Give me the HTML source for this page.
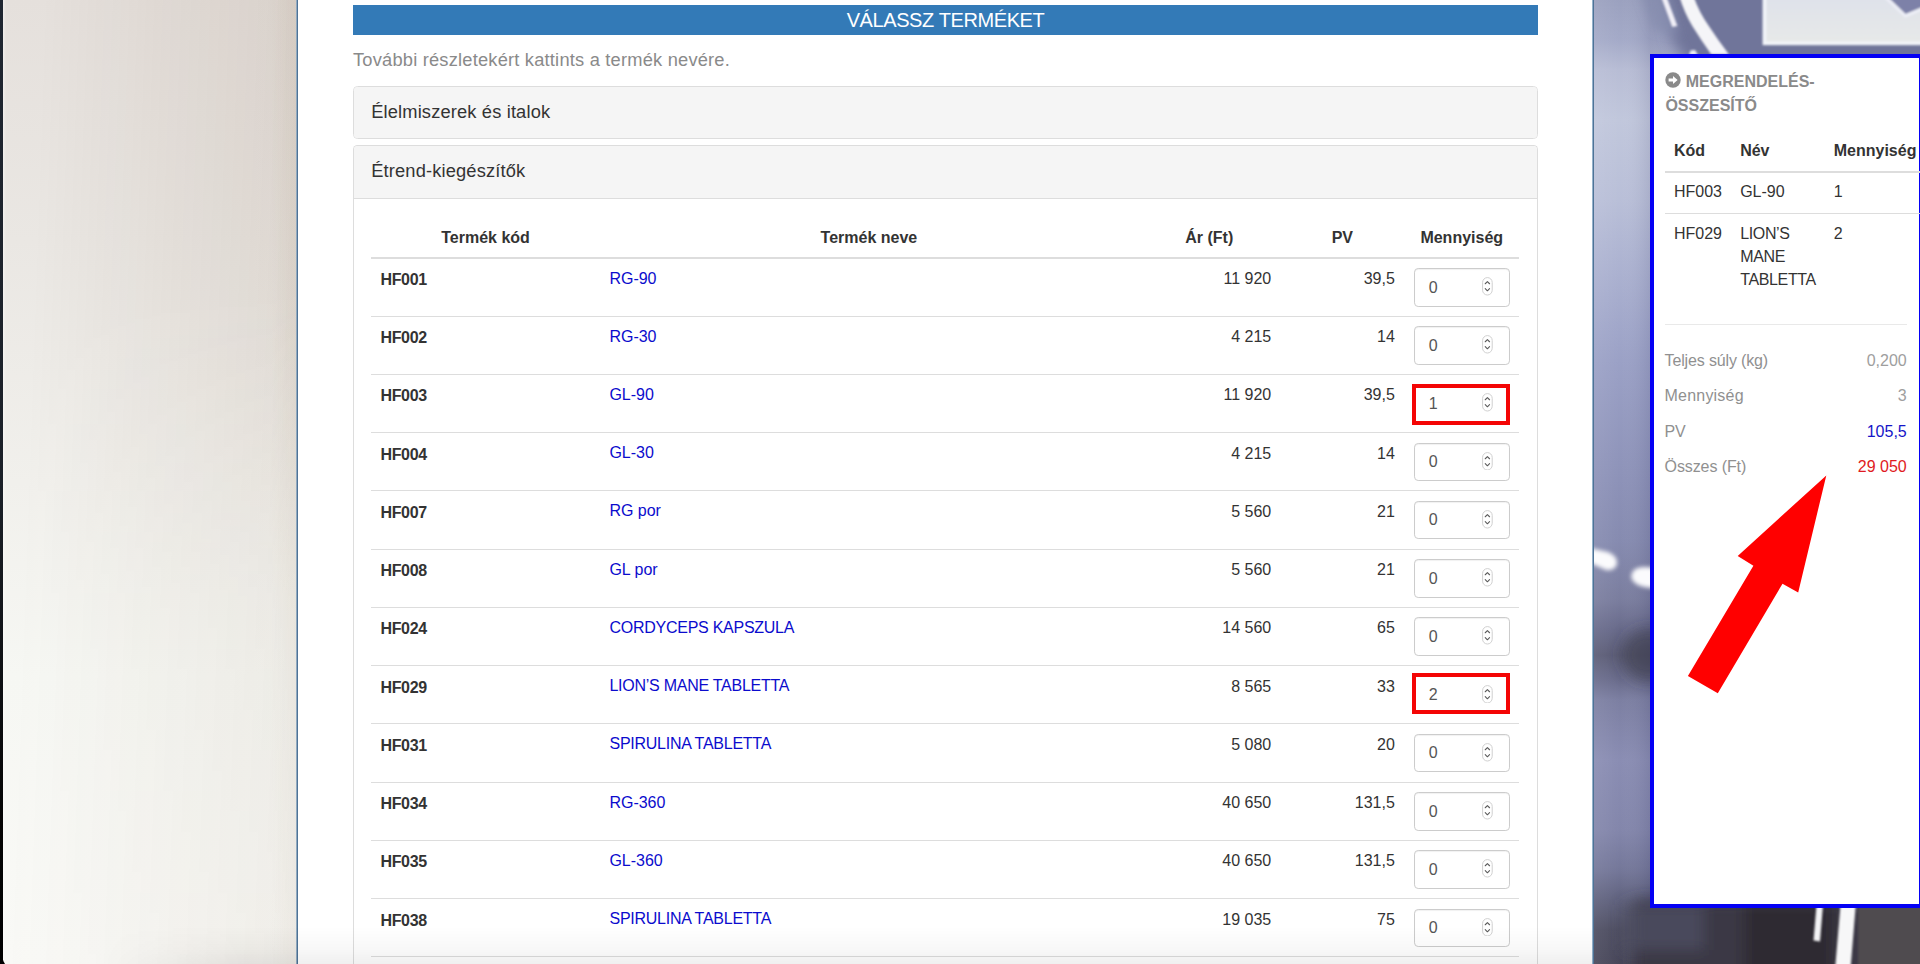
<!DOCTYPE html>
<html lang="hu">
<head>
<meta charset="utf-8">
<title>Válassz terméket</title>
<style>
*{box-sizing:border-box}
html,body{margin:0;padding:0}
body{width:1920px;height:964px;overflow:hidden;position:relative;background:#fff;
  font-family:"Liberation Sans",Arial,Helvetica,sans-serif;font-size:16px;line-height:22.857px;color:#333}
a{color:#0b0bcd;text-decoration:none}
#strip{position:absolute;left:0;top:0;width:3.2px;height:964px;background:linear-gradient(180deg,#1f2631 0%,#1b2028 50%,#050505 85%,#000 100%)}
#bgL{position:absolute;left:3px;top:0;width:294px;height:964px;overflow:hidden}
#bgR{position:absolute;left:1594px;top:0;width:326px;height:964px;overflow:hidden}
#main{position:absolute;left:296.6px;top:0;width:1297.7px;height:964px;background:#fff;
  border:0}
#bar{position:absolute;left:353px;top:5.2px;width:1185px;height:29.5px;background:#337ab7;color:#fff;
  text-align:center;font-size:20px;line-height:31px;letter-spacing:-.4px}
#hint{position:absolute;left:353px;top:47px;font-size:18.29px;line-height:26px;color:#8a8a8a;white-space:nowrap;letter-spacing:.2px}
.panel{position:absolute;left:353px;width:1184.8px;border:1.14px solid #ddd;border-radius:4.5px;background:#fff}
.panel .hd{background:#f5f5f5;height:51.4px;padding:0 0 0 17.2px;font-size:18.29px;line-height:49.6px;letter-spacing:.15px;color:#333;border-radius:3.5px 3.5px 0 0}
#p1{top:86px;height:52.8px}
#p1 .hd{border-radius:3.5px}
#p2{top:145.2px;height:900px;border-bottom:0}
#p2 .hd{border-bottom:1.14px solid #ddd;height:52.4px;line-height:50.6px}

#t{position:absolute;left:17.2px;top:52.4px;margin-top:17.1px;width:1148.1px;border-collapse:collapse;table-layout:fixed}
#t th,#t td{padding:0;vertical-align:top;font-size:16px;line-height:22.857px}
#t thead th{height:42.2px;text-align:center;font-weight:bold;border-bottom:2.3px solid #ddd;padding-top:11px;color:#333}
#t tbody tr{height:58.25px}
#t tbody th,#t tbody td{border-top:1.1px solid #ddd;height:58.25px}
#t tbody tr:first-child th,#t tbody tr:first-child td{border-top:0}
#t .c{text-align:left;font-weight:bold;padding:10.4px 0 0 9.2px;letter-spacing:-.3px}
#t .n{text-align:left;padding:9px 0 0 9.6px;letter-spacing:-.04px}
#t .n .u{letter-spacing:-.26px}
#t .r{text-align:right;padding:9.6px 9.3px 0 0}
#t .q{padding:9.6px 9.4px 0 9.6px}
.in{position:relative;height:38.3px;border:1.14px solid #ccc;border-radius:4.2px;background:#fff;color:#555;box-shadow:inset 0 1px 1px rgba(0,0,0,.06)}
.in span{position:absolute;left:14px;top:7.3px;line-height:22.857px}
.in .sp{position:absolute;left:67.5px;top:8px;width:10.8px;height:18.6px}

#bgL{background:
 linear-gradient(90deg,rgba(255,255,255,.4) 0,rgba(255,255,255,0) 3px),
 linear-gradient(180deg,#e5e0dc 0%,#eae7e3 25%,#f1f0ec 50%,#f6f7f3 70%,#f9f9f6 100%)}
#bgL::before{content:"";position:absolute;inset:0;background:
 linear-gradient(90deg,rgba(140,110,60,0) 268px,rgba(140,110,60,.07) 294px),
 linear-gradient(92deg,rgba(128,98,75,0) 12%,rgba(128,98,75,.06) 50%,rgba(128,98,75,.125) 100%);
 -webkit-mask-image:linear-gradient(180deg,#000 0%,#000 30%,rgba(0,0,0,.62) 62%,rgba(0,0,0,.55) 100%);
 mask-image:linear-gradient(180deg,#000 0%,#000 30%,rgba(0,0,0,.62) 62%,rgba(0,0,0,.55) 100%)}

#sum{position:absolute;left:1649.9px;top:53.9px;width:273.1px;height:854.2px;background:#fff;border:4.3px solid #0000ff}
#sum>*{position:absolute}
#sttl{left:0;top:0;width:265px;height:70px;color:#8a8a8a;font-weight:bold;font-size:16px;line-height:23.8px}
#ico{position:absolute;left:11px;top:14.6px}
#sttl span{position:absolute;left:11.5px;top:12.4px;text-indent:20.4px;white-space:nowrap}
#st{left:10.7px;top:0;margin-top:78.1px;border-collapse:collapse;table-layout:fixed;width:300px}
#st th,#st td{padding:0 0 0 9.4px;text-align:left;vertical-align:top;font-size:16px;line-height:22.857px;color:#333;white-space:nowrap}
#st th{height:36px;border-bottom:2.3px solid #ddd;padding-top:4.2px}
#st td{padding-top:9.6px}
#st tbody tr:first-child td{height:41.1px;border-bottom:1.1px solid #ddd;padding-top:8.2px}
#st td.w{letter-spacing:-.35px}
#hr{left:10.7px;top:266.2px;width:242.2px;height:1.2px;background:#e9e9e9}
.sr{left:10.7px;width:242.2px;height:22.857px;line-height:22.857px;color:#909090;font-size:16px;white-space:nowrap}
.sr span{position:absolute;left:0;letter-spacing:-.15px}
.sr b{position:absolute;right:0;font-weight:normal;color:#9e9e9e}
#arrow{position:absolute;left:0;top:0;pointer-events:none}

#shade{-webkit-mask-image:linear-gradient(90deg,transparent 100px,#000 240px);mask-image:linear-gradient(90deg,transparent 100px,#000 240px);position:absolute;left:3px;top:926px;width:1590px;height:38px;background:linear-gradient(180deg,rgba(0,0,0,0),rgba(0,0,0,.028) 60%,rgba(0,0,0,.06));pointer-events:none}
#corner{position:absolute;left:0;top:956.5px;width:14.4px;height:7.5px;background:radial-gradient(circle at 100% 0,rgba(0,0,0,0) 10.8px,#000 11.8px);pointer-events:none}
.rb{position:absolute;left:-2.3px;width:97.8px;height:40.8px;border:4px solid #f40505;pointer-events:none}
.rb.a{top:-1.6px}
.rb.b{top:-3.8px}
.in.nb{border-color:transparent;box-shadow:none}
.vl{position:absolute;top:0;width:2px;height:964px}
#sum{border-color:#0400f4}
</style>
</head>
<body>
<div id="strip"></div>
<div id="bgL"></div>
<div id="main"></div>
<div class="vl" style="left:296px;background:linear-gradient(90deg,#b4c6d6,#4e7396 70%)"></div><div class="vl" style="left:1592.4px;background:linear-gradient(90deg,#cfe4f7,#4e7396 55%,#4e7396)"></div>
<div id="bgR"><svg width="326" height="964" viewBox="0 0 326 964">
<defs>
<linearGradient id="gv" x1="0" y1="0" x2="0" y2="1"><stop offset="0.0000" stop-color="#9ba1bf"/><stop offset="0.0415" stop-color="#a4aac8"/><stop offset="0.0726" stop-color="#b8bdd5"/><stop offset="0.1245" stop-color="#c1c7dc"/><stop offset="0.2075" stop-color="#b9bfd8"/><stop offset="0.3112" stop-color="#a6accd"/><stop offset="0.3734" stop-color="#9ba1c6"/><stop offset="0.4979" stop-color="#8d92b8"/><stop offset="0.5602" stop-color="#868bb0"/><stop offset="0.6224" stop-color="#7a7d9e"/><stop offset="0.6535" stop-color="#686a8a"/><stop offset="0.6795" stop-color="#5b5c76"/><stop offset="0.7054" stop-color="#6a6c8c"/><stop offset="0.7261" stop-color="#7c7fa2"/><stop offset="0.7884" stop-color="#8a8db3"/><stop offset="0.8610" stop-color="#8386ab"/><stop offset="0.9025" stop-color="#747799"/><stop offset="0.9336" stop-color="#60627e"/><stop offset="0.9647" stop-color="#4e4e62"/><stop offset="1.0000" stop-color="#48475a"/></linearGradient>
<linearGradient id="gh" x1="0" y1="0" x2="326" y2="0" gradientUnits="userSpaceOnUse">
<stop offset="0" stop-color="#fff" stop-opacity=".07"/><stop offset=".08" stop-color="#fff" stop-opacity="0"/><stop offset=".17" stop-color="#101040" stop-opacity=".09"/><stop offset="1" stop-color="#101040" stop-opacity=".09"/>
</linearGradient>
<linearGradient id="gp" x1="0" y1="0" x2="0" y2="1"><stop offset="0" stop-color="#dee1ea"/><stop offset="1" stop-color="#e7e9e8"/></linearGradient>
<filter id="b1" x="-20%" y="-20%" width="140%" height="140%"><feGaussianBlur stdDeviation="1.1"/></filter>
<filter id="b2" x="-100%" y="-100%" width="300%" height="300%"><feGaussianBlur stdDeviation="7"/></filter>
<filter id="b4" x="-50%" y="-50%" width="200%" height="200%"><feGaussianBlur stdDeviation="5"/></filter>
<filter id="b3" x="-20%" y="-20%" width="140%" height="140%"><feGaussianBlur stdDeviation="2"/></filter>
</defs>
<rect width="326" height="964" fill="url(#gv)"/>
<rect width="326" height="964" fill="url(#gh)"/>
<!-- top slate area -->
<g filter="url(#b2)"><path d="M66 -20 L340 -20 L340 75 L100 75 L78 40 Z" fill="#70749a"/></g>
<g filter="url(#b4)"><path d="M44 -14 L70 -14 L86 34 L60 30 Z" fill="#858bae" opacity=".7"/></g>
<g filter="url(#b1)">
<path d="M67.2 -3 L72.6 -3 L83.4 26 L78.2 27 Z" fill="#f1eff7"/>
<path d="M85.6 -3 L99.8 -3 Q105 12 114.8 26 Q124 40 135 54.5 L117.3 54.5 Q107 40 98.3 26 Q90 12 85.6 -3 Z" fill="#f5f5f8"/>
<path d="M96.5 50.5 L101 50 L104 55 L95 55 Z" fill="#eef0f5"/>
<rect x="168.6" y="-6" width="170" height="51.2" fill="url(#gp)"/>
<path d="M170.6 -6 L170.6 43.3 L340 43.3" fill="none" stroke="#f3f5fa" stroke-width="3.4"/>
<path d="M291 -6 L340 -6 L340 2 L311.5 14 Z" fill="#7d81a8"/>
<path d="M289 -5 L311.5 16 L340 4" fill="none" stroke="#eef0f8" stroke-width="3" opacity=".9"/>
</g>
<!-- dashes -->
<g filter="url(#b3)">
<path d="M-4 548 L14 552 Q24 556 23 564 Q21 571 12 570 L-4 563 Z" fill="#fbfbfd"/>
<path d="M40 570 Q46 565 60 568 L60 588 Q44 588 38 580 Q36 574 40 570 Z" fill="#fbfbfd"/>
</g>
<!-- dark blotch -->
<g filter="url(#b2)"><ellipse cx="54" cy="655" rx="26" ry="26" fill="#3c3c4b" opacity=".6"/>
<rect x="40" y="900" width="310" height="80" fill="#3b3944"/>
<rect x="30" y="905" width="80" height="45" fill="#4f4f63" opacity=".8"/>
<rect x="150" y="900" width="90" height="80" fill="#2f2c33"/>
</g>
<g filter="url(#b1)">
<rect x="264" y="900" width="70" height="70" fill="#504b4f"/>
<path d="M222.5 905 L229 905 L226 941.5 L219.5 940.5 Z" fill="#f4f4f6"/>
<path d="M246.5 905 L261.8 905 L256.4 970 L241 970 Z" fill="#f7f7f8"/>
</g>
</svg></div>
<div id="bar">VÁLASSZ TERMÉKET</div>
<div id="hint">További részletekért kattints a termék nevére.</div>
<div class="panel" id="p1"><div class="hd">Élelmiszerek és italok</div></div>
<div class="panel" id="p2"><div class="hd">Étrend-kiegészítők</div>
<table id="t"><colgroup><col style="width:228.7px"><col style="width:538px"><col style="width:142.7px"><col style="width:123.6px"><col style="width:115.1px"></colgroup>
<thead><tr><th>Termék kód</th><th>Termék neve</th><th>Ár (Ft)</th><th>PV</th><th>Mennyiség</th></tr></thead><tbody>
<tr><th class="c">HF001</th><td class="n"><a>RG-90</a></td><td class="r">11 920</td><td class="r">39,5</td><td class="q"><div class="in"><span>0</span><svg class="sp" viewBox="0 0 11 19" preserveAspectRatio="none"><rect x=".6" y=".6" width="9.8" height="17.8" rx="4.9" fill="#fff" stroke="#cfcfcf" stroke-width="1"/><path d="M3.3 6.9 L5.5 4.7 L7.7 6.9 M3.3 11.9 L5.5 14.1 L7.7 11.9" fill="none" stroke="#5a5a5a" stroke-width="1.1" stroke-linecap="round" stroke-linejoin="round"/></svg></div></td></tr>
<tr><th class="c">HF002</th><td class="n"><a>RG-30</a></td><td class="r">4 215</td><td class="r">14</td><td class="q"><div class="in"><span>0</span><svg class="sp" viewBox="0 0 11 19" preserveAspectRatio="none"><rect x=".6" y=".6" width="9.8" height="17.8" rx="4.9" fill="#fff" stroke="#cfcfcf" stroke-width="1"/><path d="M3.3 6.9 L5.5 4.7 L7.7 6.9 M3.3 11.9 L5.5 14.1 L7.7 11.9" fill="none" stroke="#5a5a5a" stroke-width="1.1" stroke-linecap="round" stroke-linejoin="round"/></svg></div></td></tr>
<tr><th class="c">HF003</th><td class="n"><a>GL-90</a></td><td class="r">11 920</td><td class="r">39,5</td><td class="q"><div class="in nb"><span>1</span><svg class="sp" viewBox="0 0 11 19" preserveAspectRatio="none"><rect x=".6" y=".6" width="9.8" height="17.8" rx="4.9" fill="#fff" stroke="#cfcfcf" stroke-width="1"/><path d="M3.3 6.9 L5.5 4.7 L7.7 6.9 M3.3 11.9 L5.5 14.1 L7.7 11.9" fill="none" stroke="#5a5a5a" stroke-width="1.1" stroke-linecap="round" stroke-linejoin="round"/></svg><i class="rb a"></i></div></td></tr>
<tr><th class="c">HF004</th><td class="n"><a>GL-30</a></td><td class="r">4 215</td><td class="r">14</td><td class="q"><div class="in"><span>0</span><svg class="sp" viewBox="0 0 11 19" preserveAspectRatio="none"><rect x=".6" y=".6" width="9.8" height="17.8" rx="4.9" fill="#fff" stroke="#cfcfcf" stroke-width="1"/><path d="M3.3 6.9 L5.5 4.7 L7.7 6.9 M3.3 11.9 L5.5 14.1 L7.7 11.9" fill="none" stroke="#5a5a5a" stroke-width="1.1" stroke-linecap="round" stroke-linejoin="round"/></svg></div></td></tr>
<tr><th class="c">HF007</th><td class="n"><a>RG por</a></td><td class="r">5 560</td><td class="r">21</td><td class="q"><div class="in"><span>0</span><svg class="sp" viewBox="0 0 11 19" preserveAspectRatio="none"><rect x=".6" y=".6" width="9.8" height="17.8" rx="4.9" fill="#fff" stroke="#cfcfcf" stroke-width="1"/><path d="M3.3 6.9 L5.5 4.7 L7.7 6.9 M3.3 11.9 L5.5 14.1 L7.7 11.9" fill="none" stroke="#5a5a5a" stroke-width="1.1" stroke-linecap="round" stroke-linejoin="round"/></svg></div></td></tr>
<tr><th class="c">HF008</th><td class="n"><a>GL por</a></td><td class="r">5 560</td><td class="r">21</td><td class="q"><div class="in"><span>0</span><svg class="sp" viewBox="0 0 11 19" preserveAspectRatio="none"><rect x=".6" y=".6" width="9.8" height="17.8" rx="4.9" fill="#fff" stroke="#cfcfcf" stroke-width="1"/><path d="M3.3 6.9 L5.5 4.7 L7.7 6.9 M3.3 11.9 L5.5 14.1 L7.7 11.9" fill="none" stroke="#5a5a5a" stroke-width="1.1" stroke-linecap="round" stroke-linejoin="round"/></svg></div></td></tr>
<tr><th class="c">HF024</th><td class="n"><a class="u">CORDYCEPS KAPSZULA</a></td><td class="r">14 560</td><td class="r">65</td><td class="q"><div class="in"><span>0</span><svg class="sp" viewBox="0 0 11 19" preserveAspectRatio="none"><rect x=".6" y=".6" width="9.8" height="17.8" rx="4.9" fill="#fff" stroke="#cfcfcf" stroke-width="1"/><path d="M3.3 6.9 L5.5 4.7 L7.7 6.9 M3.3 11.9 L5.5 14.1 L7.7 11.9" fill="none" stroke="#5a5a5a" stroke-width="1.1" stroke-linecap="round" stroke-linejoin="round"/></svg></div></td></tr>
<tr><th class="c">HF029</th><td class="n"><a class="u">LION’S MANE TABLETTA</a></td><td class="r">8 565</td><td class="r">33</td><td class="q"><div class="in nb"><span>2</span><svg class="sp" viewBox="0 0 11 19" preserveAspectRatio="none"><rect x=".6" y=".6" width="9.8" height="17.8" rx="4.9" fill="#fff" stroke="#cfcfcf" stroke-width="1"/><path d="M3.3 6.9 L5.5 4.7 L7.7 6.9 M3.3 11.9 L5.5 14.1 L7.7 11.9" fill="none" stroke="#5a5a5a" stroke-width="1.1" stroke-linecap="round" stroke-linejoin="round"/></svg><i class="rb b"></i></div></td></tr>
<tr><th class="c">HF031</th><td class="n"><a class="u">SPIRULINA TABLETTA</a></td><td class="r">5 080</td><td class="r">20</td><td class="q"><div class="in"><span>0</span><svg class="sp" viewBox="0 0 11 19" preserveAspectRatio="none"><rect x=".6" y=".6" width="9.8" height="17.8" rx="4.9" fill="#fff" stroke="#cfcfcf" stroke-width="1"/><path d="M3.3 6.9 L5.5 4.7 L7.7 6.9 M3.3 11.9 L5.5 14.1 L7.7 11.9" fill="none" stroke="#5a5a5a" stroke-width="1.1" stroke-linecap="round" stroke-linejoin="round"/></svg></div></td></tr>
<tr><th class="c">HF034</th><td class="n"><a>RG-360</a></td><td class="r">40 650</td><td class="r">131,5</td><td class="q"><div class="in"><span>0</span><svg class="sp" viewBox="0 0 11 19" preserveAspectRatio="none"><rect x=".6" y=".6" width="9.8" height="17.8" rx="4.9" fill="#fff" stroke="#cfcfcf" stroke-width="1"/><path d="M3.3 6.9 L5.5 4.7 L7.7 6.9 M3.3 11.9 L5.5 14.1 L7.7 11.9" fill="none" stroke="#5a5a5a" stroke-width="1.1" stroke-linecap="round" stroke-linejoin="round"/></svg></div></td></tr>
<tr><th class="c">HF035</th><td class="n"><a>GL-360</a></td><td class="r">40 650</td><td class="r">131,5</td><td class="q"><div class="in"><span>0</span><svg class="sp" viewBox="0 0 11 19" preserveAspectRatio="none"><rect x=".6" y=".6" width="9.8" height="17.8" rx="4.9" fill="#fff" stroke="#cfcfcf" stroke-width="1"/><path d="M3.3 6.9 L5.5 4.7 L7.7 6.9 M3.3 11.9 L5.5 14.1 L7.7 11.9" fill="none" stroke="#5a5a5a" stroke-width="1.1" stroke-linecap="round" stroke-linejoin="round"/></svg></div></td></tr>
<tr><th class="c">HF038</th><td class="n"><a class="u">SPIRULINA TABLETTA</a></td><td class="r">19 035</td><td class="r">75</td><td class="q"><div class="in"><span>0</span><svg class="sp" viewBox="0 0 11 19" preserveAspectRatio="none"><rect x=".6" y=".6" width="9.8" height="17.8" rx="4.9" fill="#fff" stroke="#cfcfcf" stroke-width="1"/><path d="M3.3 6.9 L5.5 4.7 L7.7 6.9 M3.3 11.9 L5.5 14.1 L7.7 11.9" fill="none" stroke="#5a5a5a" stroke-width="1.1" stroke-linecap="round" stroke-linejoin="round"/></svg></div></td></tr>
<tr><th class="c">HF039</th><td class="n"><a class="u">CORDYCEPS KAPSZULA</a></td><td class="r">43 680</td><td class="r">195</td><td class="q"><div class="in"><span>0</span><svg class="sp" viewBox="0 0 11 19" preserveAspectRatio="none"><rect x=".6" y=".6" width="9.8" height="17.8" rx="4.9" fill="#fff" stroke="#cfcfcf" stroke-width="1"/><path d="M3.3 6.9 L5.5 4.7 L7.7 6.9 M3.3 11.9 L5.5 14.1 L7.7 11.9" fill="none" stroke="#5a5a5a" stroke-width="1.1" stroke-linecap="round" stroke-linejoin="round"/></svg></div></td></tr>
</tbody></table>
</div>
<div id="sum">
<div id="sttl"><svg id="ico" width="16" height="16" viewBox="0 0 16 16"><circle cx="8" cy="8" r="7.7" fill="#8a8a8a"/><path d="M3.6 6.6 H8 V4 L12.6 8 L8 12 V9.4 H3.6 Z" fill="#fff"/></svg><span>MEGRENDELÉS-<br>ÖSSZESÍTŐ</span></div>
<table id="st"><thead><tr><th style="width:66.2px">Kód</th><th style="width:93.6px">Név</th><th>Mennyiség</th></tr></thead>
<tbody><tr><td>HF003</td><td>GL-90</td><td>1</td></tr>
<tr><td>HF029</td><td class="w">LION’S<br>MANE<br>TABLETTA</td><td>2</td></tr></tbody></table>
<div id="hr"></div>
<div class="sr" style="top:291.9px"><span>Teljes súly (kg)</span><b>0,200</b></div>
<div class="sr" style="top:327.4px"><span style="letter-spacing:.2px">Mennyiség</span><b>3</b></div>
<div class="sr" style="top:362.9px"><span>PV</span><b style="color:#1515c8">105,5</b></div>
<div class="sr" style="top:398.4px"><span style="letter-spacing:-.1px">Összes (Ft)</span><b style="color:#e01a22">29 050</b></div>
</div>
<svg id="arrow" width="1920" height="964" viewBox="0 0 1920 964"><polygon points="1826.3,475.4 1737.7,555.9 1753.4,565.8 1687.9,676.1 1717.8,693.3 1782.5,583.7 1798.2,592.4" fill="#ff0000"/></svg>
<div id="shade"></div><div id="corner"></div>
</body>
</html>
